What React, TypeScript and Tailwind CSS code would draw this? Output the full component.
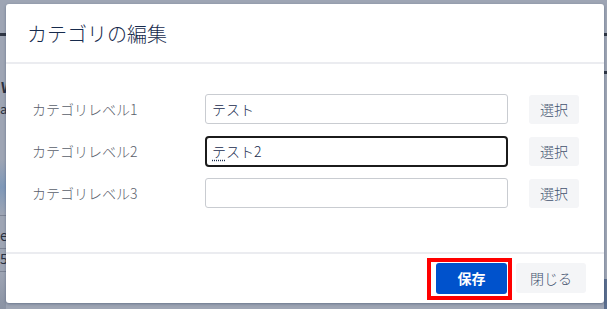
import React from "react";

const font = { fontFamily: '"Noto Sans CJK JP", "Noto Sans", sans-serif' };

function Row({ label, value, focused }: { label: string; value?: React.ReactNode; focused?: boolean }) {
  return (
    <div className="flex items-center h-[30px]">
      <div className="w-[173px] text-[14px] font-light text-[#5a606b] leading-none">{label}</div>
      <div
        className={
          focused
            ? "w-[303px] h-[31px] rounded-[4px] border-2 border-[#1b1b1b] bg-white flex items-center pl-[5px] text-[14px] font-light text-[#172b4d]"
            : "w-[303px] h-[30px] rounded-[3px] border border-[#c9ccd1] bg-white flex items-center pl-[6px] text-[14px] font-light text-[#172b4d]"
        }
      >
        {value}
      </div>
      <div className="ml-[21px] w-[50px] h-[29px] rounded-[3px] bg-[#f4f5f7] flex items-center justify-center text-[14px] font-light text-[#42526e]">
        選択
      </div>
    </div>
  );
}

export default function App() {
  return (
    <div className="relative w-[607px] h-[309px] overflow-hidden bg-[#9ea5b4]" style={font}>
      {/* dimmed page behind the dialog */}
      <div className="flex h-full">
        <div className="w-[6px] overflow-hidden flex flex-col">
          <div className="h-[33px] shrink-0" />
          <div className="h-[3px] shrink-0 bg-[#2f3644]" />
          <div className="h-[44px] shrink-0" />
          <div className="text-[14px] font-bold leading-none text-[#2a3140] pl-[1px]">W</div>
          <div className="h-[8px] shrink-0" />
          <div className="text-[13px] leading-none text-[#2a3140]">ar</div>
          <div className="h-[44px] shrink-0" />
          <div className="h-[56px] shrink-0 bg-gradient-to-b from-[#9ea5b4] via-[#7f98b8] to-[#9ea5b4]" />
          <div className="h-[1px] shrink-0 bg-[#7d8494]" />
          <div className="h-[12px] shrink-0" />
          <div className="text-[14px] leading-none text-[#2a3140]">e</div>
          <div className="h-[6px] shrink-0" />
          <div className="h-[1px] shrink-0 bg-[#7d8494]" />
          <div className="h-[2px] shrink-0" />
          <div className="text-[14px] leading-none text-[#2a3140]">5</div>
          <div className="h-[6px] shrink-0" />
          <div className="h-[1px] shrink-0 bg-[#7d8494]" />
          <div className="flex-1 bg-gradient-to-b from-[#9ea5b4] to-[#8a92a3]" />
        </div>
        <div className="flex-1" />
        <div className="w-[3px] flex flex-col">
          <div className="h-[33px] shrink-0" />
          <div className="h-[3px] shrink-0 bg-[#2f3644]" />
          <div className="h-[35px] shrink-0" />
          <div className="h-[3px] shrink-0 bg-[#2f3644]" />
          <div className="flex-1" />
          <div className="h-[30px] shrink-0 bg-[#5c6f8f]" />
        </div>
      </div>

      {/* dialog */}
      <div className="absolute left-[6px] top-[4px] w-[598px] h-[299px] bg-white rounded-[3px] shadow-[0_1px_3px_rgba(9,30,66,0.35)] flex flex-col">
        <div className="h-[58px] flex items-center pl-[21px] pt-[2px]">
          <div className="text-[20px] font-light text-[#172b4d] leading-none">カテゴリの編集</div>
        </div>
        <div className="h-[2px] bg-[#ebecf0]" />
        <div className="h-[188px] pt-[30px] pl-[26px] flex flex-col gap-[12px]">
          <Row label="カテゴリレベル1" value="テスト" />
          <Row
            label="カテゴリレベル2"
            focused
            value={
              <span>
                <span className="underline decoration-dotted underline-offset-[3px]">テ</span>スト2
              </span>
            }
          />
          <Row label="カテゴリレベル3" />
        </div>
        <div className="h-[2px] bg-[#ebecf0]" />
        <div className="flex-1 flex justify-end items-start pt-[9px] pr-[18px] gap-[9px]">
          <div className="relative w-[71px] h-[31px] rounded-[3px] bg-[#0052cc] flex items-center justify-center text-[14px] font-bold text-white">
            保存
            <div className="absolute left-[-9px] top-[-5px] w-[85px] h-[42px] border-[4px] border-[#ff0000]" />
          </div>
          <div className="w-[70px] h-[30px] rounded-[3px] bg-[#f4f5f7] flex items-center justify-center text-[14px] font-light text-[#42526e]">
            閉じる
          </div>
        </div>
      </div>
    </div>
  );
}
